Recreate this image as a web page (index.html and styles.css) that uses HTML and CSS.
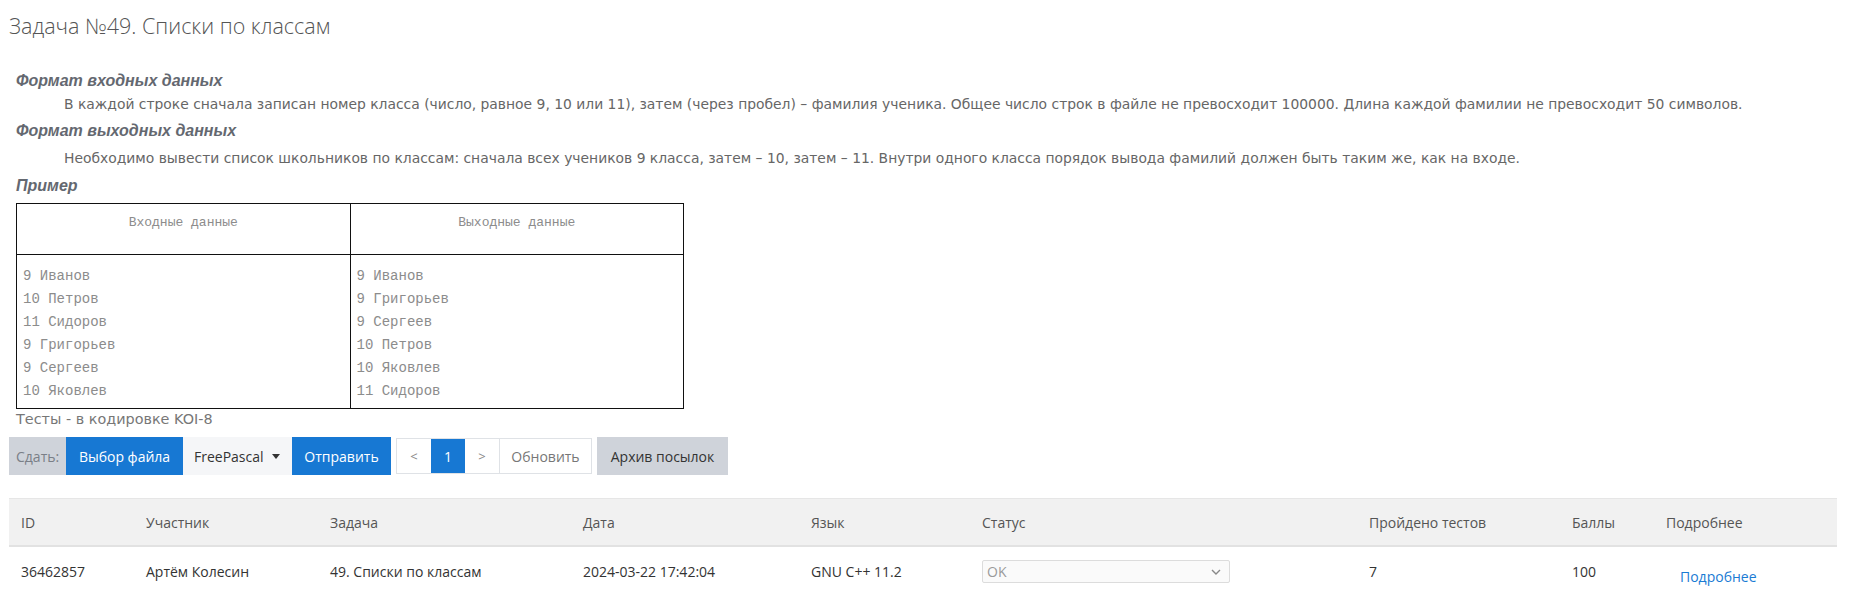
FILE: index.html
```html
<!DOCTYPE html>
<html lang="ru">
<head>
<meta charset="utf-8">
<title>Задача №49</title>
<link rel="stylesheet" href="styles.css">
</head>
<body>
<h1 class="title">Задача №49. Списки по классам</h1>
<div class="statement">
  <h3 class="sec sec-first">Формат входных данных</h3>
  <p class="txt txt-first">В каждой строке сначала записан номер класса (число, равное 9, 10 или 11), затем (через пробел) – фамилия ученика. Общее число строк в файле не превосходит 100000. Длина каждой фамилии не превосходит 50 символов.</p>
  <h3 class="sec">Формат выходных данных</h3>
  <p class="txt">Необходимо вывести список школьников по классам: сначала всех учеников 9 класса, затем – 10, затем – 11. Внутри одного класса порядок вывода фамилий должен быть таким же, как на входе.</p>
  <h3 class="sec sec-sample">Пример</h3>
  <table class="sample">
    <tr><th>Входные данные</th><th>Выходные данные</th></tr>
    <tr>
      <td><div class="lines"><div>9 Иванов</div><div>10 Петров</div><div>11 Сидоров</div><div>9 Григорьев</div><div>9 Сергеев</div><div>10 Яковлев</div></div></td>
      <td><div class="lines"><div>9 Иванов</div><div>9 Григорьев</div><div>9 Сергеев</div><div>10 Петров</div><div>10 Яковлев</div><div>11 Сидоров</div></div></td>
    </tr>
  </table>
  <p class="enc">Тесты - в кодировке KOI-8</p>
</div>
<div class="toolbar">
  <span class="tb-label">Сдать:</span>
  <span class="tb-btn tb-primary tb-file">Выбор файла</span>
  <span class="tb-lang">FreePascal<span class="caret"></span></span>
  <span class="tb-btn tb-primary tb-send">Отправить</span>
  <div class="pager">
    <span class="pg pg-arrow">&lt;</span>
    <span class="pg pg-active">1</span>
    <span class="pg pg-arrow">&gt;</span>
    <span class="pg pg-refresh">Обновить</span>
  </div>
  <span class="tb-btn tb-archive">Архив посылок</span>
</div>
<table class="runs">
  <colgroup>
    <col class="c-id"><col class="c-user"><col class="c-prob"><col class="c-date"><col class="c-lang"><col class="c-status"><col class="c-tests"><col class="c-score"><col class="c-more">
  </colgroup>
  <thead>
    <tr><th>ID</th><th>Участник</th><th>Задача</th><th>Дата</th><th>Язык</th><th>Статус</th><th>Пройдено тестов</th><th>Баллы</th><th>Подробнее</th></tr>
  </thead>
  <tbody>
    <tr>
      <td>36462857</td>
      <td>Артём Колесин</td>
      <td>49. Списки по классам</td>
      <td>2024-03-22 17:42:04</td>
      <td>GNU C++ 11.2</td>
      <td><div class="status-select"><span>OK</span><svg class="chev" width="10" height="6" viewBox="0 0 10 6"><path d="M1 1l4 4 4-4" fill="none" stroke="#888" stroke-width="1.4"/></svg></div></td>
      <td>7</td>
      <td>100</td>
      <td><a class="more" href="#">Подробнее</a></td>
    </tr>
  </tbody>
</table>
</body>
</html>
```
FILE: styles.css
```css
html, body {
  margin: 0;
  padding: 0;
  background: #fff;
}
body {
  padding: 0 13px 0 9px;
  font-family: "Open Sans", "Noto Sans", sans-serif;
  color: #333;
}
.title {
  margin: 11px 0 0 0;
  font-family: "Open Sans", sans-serif;
  font-weight: 300;
  font-size: 21.5px;
  line-height: 30px;
  color: #555;
}
.statement {
  padding-left: 7px;
}
.sec {
  margin: 7px 0 0 0;
  font-family: "Liberation Sans", Arial, sans-serif;
  font-weight: bold;
  font-style: italic;
  font-size: 16px;
  line-height: 20px;
  color: #646870;
}
.sec-first {
  margin-top: 30px;
}
.sec-sample {
  margin-top: 8px;
}
.txt {
  margin: 7px 0 0 48px;
  font-family: "DejaVu Sans", Verdana, sans-serif;
  font-size: 13.88px;
  line-height: 20px;
  color: #666;
}
.txt-first {
  margin-top: 3px;
}
.sample {
  margin-top: 7px;
  border-collapse: collapse;
  width: 668px;
  table-layout: fixed;
  font-family: "Liberation Mono", "Courier New", monospace;
  color: #8c8c8c;
}
.sample th, .sample td {
  border: 1px solid #111;
  padding: 0;
}
.sample th {
  font-weight: normal;
  font-size: 13px;
  text-align: center;
  line-height: 22px;
  padding: 8px 0 20px 0;
}
.sample td {
  font-size: 14px;
  text-align: left;
  vertical-align: top;
  padding: 10px 5px 5px 6px;
}
.lines div {
  line-height: 23px;
  white-space: pre;
}
.enc {
  margin: 0;
  font-family: "DejaVu Sans", Verdana, sans-serif;
  font-size: 14.4px;
  line-height: 20px;
  color: #777;
}
.toolbar {
  margin-top: 8px;
  display: flex;
  align-items: center;
  height: 38px;
  font-size: 14px;
}
.tb-label, .tb-btn, .tb-lang {
  height: 38px;
  display: flex;
  align-items: center;
  box-sizing: border-box;
}
.tb-label {
  background: #cfd3da;
  color: #7a7f87;
  padding: 0 7px;
  width: 57px;
}
.tb-primary {
  background: #1778d3;
  color: #fff;
  justify-content: center;
}
.tb-file {
  width: 117px;
}
.tb-send {
  width: 99px;
}
.tb-lang {
  background: #f5f6f8;
  color: #333;
  width: 109px;
  padding-left: 11px;
}
.caret {
  margin-left: 8px;
  width: 0;
  height: 0;
  border-left: 4px solid transparent;
  border-right: 4px solid transparent;
  border-top: 5px solid #333;
}
.pager {
  margin-left: 5px;
  display: flex;
  height: 36px;
  border: 1px solid #dfe2e6;
  box-sizing: border-box;
  background: #fff;
}
.pg {
  display: flex;
  align-items: center;
  justify-content: center;
  color: #888;
  height: 34px;
}
.pg-arrow {
  width: 34px;
  font-size: 13px;
}
.pg-active {
  width: 34px;
  background: #1778d3;
  color: #fff;
}
.pg-refresh {
  width: 91px;
  border-left: 1px solid #dfe2e6;
  color: #777;
}
.tb-archive {
  margin-left: 5px;
  width: 131px;
  background: #cfd3da;
  color: #333;
  justify-content: center;
}
.runs {
  margin-top: 23px;
  width: 1828px;
  border-collapse: collapse;
  table-layout: fixed;
  font-size: 14px;
}
.c-id { width: 125px; }
.c-user { width: 184px; }
.c-prob { width: 253px; }
.c-date { width: 228px; }
.c-lang { width: 171px; }
.c-status { width: 387px; }
.c-tests { width: 203px; }
.c-score { width: 94px; }
.c-more { width: 183px; }
.runs thead tr {
  background: #f1f1f1;
  border-top: 1px solid #e6e6e6;
  border-bottom: 2px solid #e2e2e2;
}
.runs th {
  font-weight: normal;
  text-align: left;
  color: #555;
  height: 46px;
  padding: 0 12px;
}
.runs td {
  color: #333;
  padding: 15px 12px 14px 12px;
  vertical-align: top;
  line-height: 19px;
}
.status-select {
  width: 248px;
  height: 23px;
  box-sizing: border-box;
  border: 1px solid #dcdcdc;
  border-radius: 2px;
  background: #fafafa;
  display: flex;
  align-items: center;
  justify-content: space-between;
  padding: 0 8px 0 4px;
  color: #9a9a9a;
  margin-top: -2px;
}
.more {
  display: inline-block;
  margin: 5px 0 0 14px;
  color: #1a7bd4;
  text-decoration: none;
}
```
